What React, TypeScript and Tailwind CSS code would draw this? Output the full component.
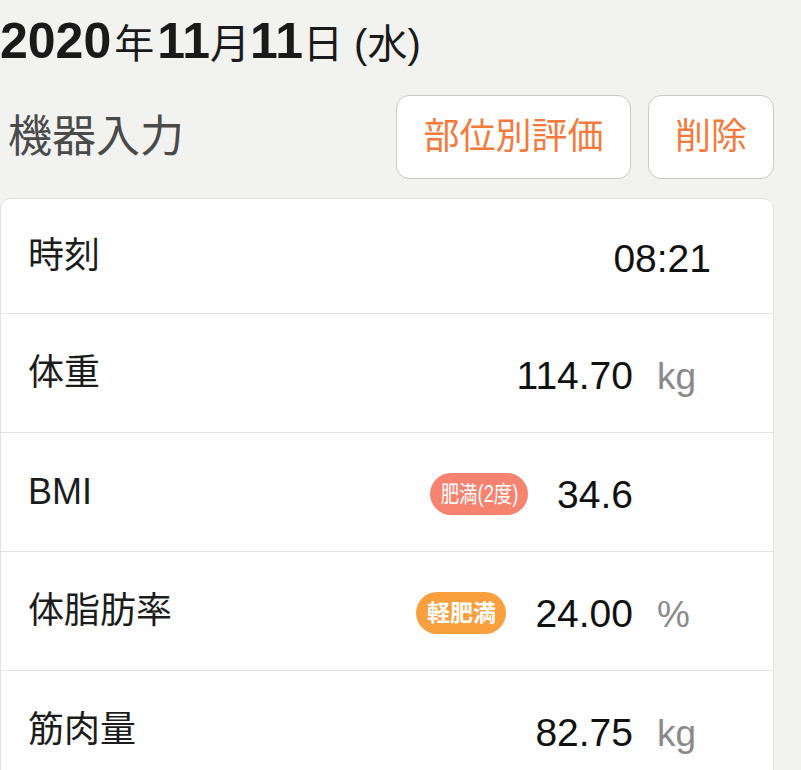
import React from "react";

type Row = {
  label: string;
  value: string;
  unit?: string;
  badge?: { text: string; tone: "salmon" | "orange" };
  noUnitColumn?: boolean;
};

const rows: Row[] = [
  { label: "時刻", value: "08:21", noUnitColumn: true },
  { label: "体重", value: "114.70", unit: "kg" },
  { label: "BMI", value: "34.6", badge: { text: "肥満(2度)", tone: "salmon" } },
  { label: "体脂肪率", value: "24.00", unit: "%", badge: { text: "軽肥満", tone: "orange" } },
  { label: "筋肉量", value: "82.75", unit: "kg" },
];

function Badge({ text, tone }: { text: string; tone: "salmon" | "orange" }) {
  if (tone === "salmon") {
    return (
      <span className="flex h-[42px] w-[98px] items-center justify-center rounded-full bg-[#f6836f] text-white">
        <span className="scale-x-[0.8] whitespace-nowrap text-[23px] leading-none">{text}</span>
      </span>
    );
  }
  return (
    <span className="flex h-[42px] w-[90px] items-center justify-center rounded-full bg-[#fa9f3e] text-white">
      <span className="whitespace-nowrap text-[23px] font-bold leading-none">{text}</span>
    </span>
  );
}

function MeasureRow({ row, first }: { row: Row; first: boolean }) {
  return (
    <div
      className={
        first
          ? "flex h-[114px] items-center justify-between pl-[27px] pr-[62px]"
          : "flex h-[119px] items-center justify-between border-t border-[#e4e4e4] pl-[27px] pr-[62px]"
      }
    >
      <span className="text-[36px] leading-none text-[#1c1c1c]">{row.label}</span>
      <div className="flex items-center">
        {row.badge && (
          <div className="mr-[29px] mt-[4px]">
            <Badge text={row.badge.text} tone={row.badge.tone} />
          </div>
        )}
        <span className="mt-[4px] text-[39px] leading-none text-[#111]">{row.value}</span>
        {!row.noUnitColumn && (
          <span className="ml-[24px] mt-[6px] w-[54px] text-[37px] leading-none text-[#8a8a8a]">
            {row.unit ?? ""}
          </span>
        )}
      </div>
    </div>
  );
}

export default function App() {
  return (
    <div
      className="h-[770px] w-[801px] overflow-hidden bg-[#f2f2f1]"
      style={{ fontFamily: '"Liberation Sans", "Noto Sans CJK JP", sans-serif' }}
    >
      <div className="w-[774px]">
        <div className="flex h-[80px] items-baseline pt-[16px] text-[#1a1a1a]">
          <span className="text-[50px] font-bold leading-none">2020</span>
          <span className="mx-[3px] text-[40px] leading-none">年</span>
          <span className="text-[50px] font-bold leading-none">11</span>
          <span className="text-[40px] leading-none">月</span>
          <span className="text-[50px] font-bold leading-none">11</span>
          <span className="text-[40px] leading-none">日 (水)</span>
        </div>

        <div className="mt-[15px] flex h-[84px] items-center justify-between">
          <span className="ml-[8px] text-[44px] leading-none text-[#4a4a4a]">機器入力</span>
          <div className="flex gap-[17px]">
            <button className="h-[84px] w-[235px] rounded-[13px] border border-[#c9c9c9] bg-white text-[36px] leading-none text-[#f47a3c]">
              部位別評価
            </button>
            <button className="h-[84px] w-[126px] rounded-[13px] border border-[#c9c9c9] bg-white text-[36px] leading-none text-[#f47a3c]">
              削除
            </button>
          </div>
        </div>

        <div className="mt-[19px] overflow-hidden rounded-[11px] border border-[#e2e2e2] bg-white">
          {rows.map((row, i) => (
            <MeasureRow key={row.label} row={row} first={i === 0} />
          ))}
        </div>
      </div>
    </div>
  );
}
